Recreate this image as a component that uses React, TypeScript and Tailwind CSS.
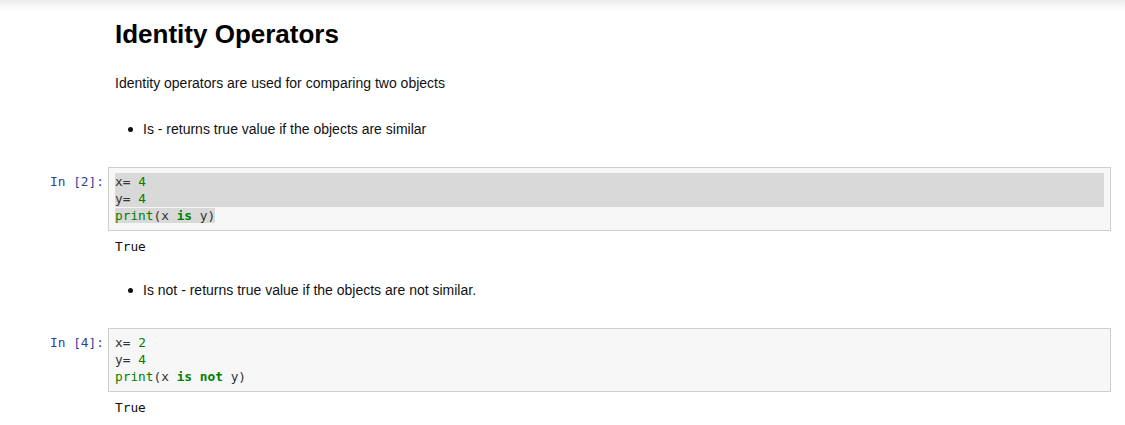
const mono = "font-['DejaVu_Sans_Mono','Liberation_Mono',monospace] text-[12.8px] leading-[17px]";

const Num = ({ v }: { v: string }) => <span className="text-[#008000]">{v}</span>;
const Kw = ({ v }: { v: string }) => <span className="font-bold text-[#008000]">{v}</span>;

const Bullet = ({ text, className }: { text: string; className?: string }) => (
  <div className={`flex items-center pl-[128px] h-5 ${className ?? ""}`}>
    <span className="w-[5px] h-[5px] rounded-full bg-[#111]" />
    <span className="ml-[10px]">{text}</span>
  </div>
);

const CodeCell = ({
  n,
  lines,
  selected,
  className,
}: {
  n: number;
  lines: React.ReactNode[];
  selected?: boolean;
  className?: string;
}) => (
  <div className={`flex ${className ?? ""}`}>
    <div className={`w-[108px] shrink-0 pr-[4px] pt-[6px] text-right text-[#303F9F] ${mono}`}>In [{n}]:</div>
    <div className={`flex-1 mr-[14px] border border-[#cfcfcf] bg-[#f7f7f7] px-[6px] pt-[5px] pb-[6px] text-[#333] ${mono}`}>
      {lines.map((l, i) => (
        <div key={i} className="h-[17px] whitespace-pre">
          {selected && i < 2 ? (
            <div className="bg-[#d9d9d9]">{l}</div>
          ) : selected ? (
            <span className="bg-[#d9d9d9]">{l}</span>
          ) : (
            l
          )}
        </div>
      ))}
    </div>
  </div>
);

const Output = ({ className }: { className?: string }) => (
  <div className={`pl-[115px] text-[#111] ${mono} ${className ?? ""}`}>True</div>
);

export default function App() {
  return (
    <div className="w-[1125px] h-[425px] overflow-hidden bg-white text-[#111] font-['Liberation_Sans',Arial,sans-serif] text-[14px]">
      <div className="h-[10px] bg-gradient-to-b from-[#ececec] to-white" />
      <h1 className="pl-[115px] mt-[9px] text-[26px] leading-[31px] font-bold text-black">Identity Operators</h1>
      <p className="pl-[115px] mt-[23px] leading-5">Identity operators are used for comparing two objects</p>
      <Bullet className="mt-[26px]" text="Is - returns true value if the objects are similar" />
      <CodeCell
        className="mt-[28px]"
        n={2}
        selected
        lines={[
          <>x= <Num v="4" /></>,
          <>y= <Num v="4" /></>,
          <><span className="text-[#008000]">print</span>(x <Kw v="is" /> y)</>,
        ]}
      />
      <Output className="mt-[7px]" />
      <Bullet className="mt-[25px]" text="Is not - returns true value if the objects are not similar." />
      <CodeCell
        className="mt-[28px]"
        n={4}
        lines={[
          <>x= <Num v="2" /></>,
          <>y= <Num v="4" /></>,
          <><span className="text-[#008000]">print</span>(x <Kw v="is" /> <Kw v="not" /> y)</>,
        ]}
      />
      <Output className="mt-[7px]" />
    </div>
  );
}
